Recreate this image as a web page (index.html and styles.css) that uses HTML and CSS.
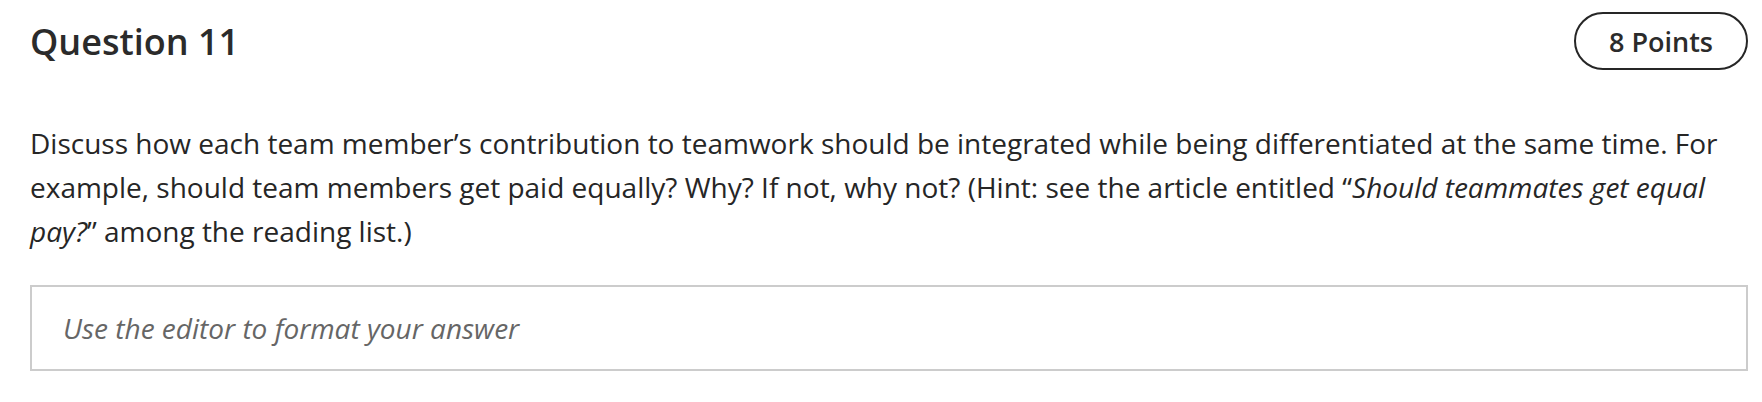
FILE: index.html
```html
<!DOCTYPE html>
<html lang="en">
<head>
<meta charset="utf-8">
<title>Question 11</title>
<link rel="stylesheet" href="styles.css">
</head>
<body>
<div class="question">
  <div class="question-header">
    <h2 class="question-title">Question 11</h2>
    <span class="points">8 Points</span>
  </div>
  <p class="question-text">Discuss how each team member’s contribution to teamwork should be integrated while being differentiated at the same time. For example, should team members get paid equally? Why? If not, why not? (Hint: see the article entitled “<em>Should teammates get equal pay?</em>” among the reading list.)</p>
  <div class="answer-box">
    <span class="placeholder">Use the editor to format your answer</span>
  </div>
</div>
</body>
</html>
```
FILE: styles.css
```css
html, body {
  margin: 0;
  padding: 0;
  background: #fff;
}
body {
  font-family: "Open Sans", "Noto Sans", sans-serif;
  color: #262626;
}
.question {
  padding: 12px 14px 0 30px;
}
.question-header {
  display: flex;
  justify-content: space-between;
  align-items: flex-start;
  height: 58px;
}
.question-title {
  margin: 12px 0 0 0;
  font-size: 36px;
  font-weight: 600;
  line-height: 36px;
  color: #2b2b2b;
}
.points {
  box-sizing: border-box;
  height: 58px;
  width: 174px;
  border: 2px solid #262626;
  border-radius: 30px;
  display: flex;
  align-items: center;
  justify-content: center;
  font-size: 27px;
  font-weight: 600;
  color: #2b2b2b;
}
.question-text {
  margin: 51px 0 0 0;
  font-size: 28px;
  line-height: 44px;
  color: #262626;
}
.answer-box {
  box-sizing: border-box;
  margin-top: 32px;
  height: 86px;
  border: 2px solid #cccccc;
  display: flex;
  align-items: center;
  padding-left: 31px;
}
.placeholder {
  font-style: italic;
  font-size: 28px;
  color: #666666;
}
```
